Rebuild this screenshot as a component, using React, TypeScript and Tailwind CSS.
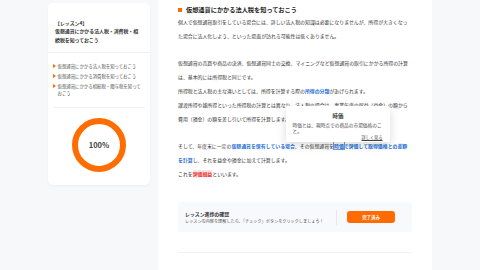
import React from 'react';

const lessons = [
  ['仮想通貨にかかる法人税を知っておこう'],
  ['仮想通貨にかかる消費税を知っておこう'],
  ['仮想通貨にかかる相続税・贈与税を知って', 'おこう'],
];

const Bullet = () => (
  <svg width="3" height="4" viewBox="0 0 3 4" className="mt-[1.5px] shrink-0">
    <path d="M0 0 L3 2 L0 4 Z" fill="#ff6b00" />
  </svg>
);

const ProgressRing = () => (
  <div className="relative w-[54px] h-[54px]">
    <svg width="54" height="54" viewBox="0 0 54 54">
      <circle cx="27" cy="27" r="24" fill="none" stroke="#ff6d00" strokeWidth="6" />
    </svg>
    <div className="absolute inset-0 flex items-center justify-center text-[7.5px] font-bold text-[#444]">
      100%
    </div>
  </div>
);

const Blue = ({ children }: { children: React.ReactNode }) => (
  <span className="font-bold text-[#1f6fd6]">{children}</span>
);

export default function App() {
  return (
    <div className="w-[480px] h-[270px] overflow-hidden flex bg-[#f7f8fa] font-['Noto_Sans_CJK_JP','Noto_Sans',sans-serif] text-[#333]">
      {/* sidebar */}
      <div className="w-[158px] shrink-0 pl-[48px] pt-[3px]">
        <div className="w-[102px] bg-white rounded-[5px] shadow-[0_1px_3px_rgba(0,0,0,0.04)]">
          <div className="px-[7px] pt-[16px] pb-[8px] text-[4.9px] font-bold leading-[8.3px] text-[#333]">
            【レッスン4】
            <br />
            仮想通貨にかかる法人税・消費税・相
            <br />
            続税を知っておこう
          </div>
          <div className="h-px bg-[#f0f1f3]" />
          <div className="px-[5px] pt-[10px] pb-[7px]">
            {lessons.map((lines, i) => (
              <div key={i} className="flex gap-[1.5px] mb-[3px] text-[4.4px] leading-[7px] text-[#555]">
                <Bullet />
                <div>
                  {lines.map((l, j) => (
                    <div key={j} className="whitespace-nowrap">{l}</div>
                  ))}
                </div>
              </div>
            ))}
          </div>
          <div className="mx-[5px] h-px bg-[#f0f1f3]" />
          <div className="flex justify-center pt-[10px] pb-[13px]">
            <ProgressRing />
          </div>
        </div>
      </div>

      {/* main */}
      <div className="w-[274px] shrink-0 bg-white px-[20px] pt-[4px] relative">
        <div className="h-[11px] flex items-center gap-[4px]">
          <div className="w-[4px] h-[4px] bg-[#ff6b00]" />
          <div className="text-[6.2px] font-bold text-[#222] whitespace-nowrap">仮想通貨にかかる法人税を知っておこう</div>
        </div>
        <div className="text-[4.9px] leading-[14px] whitespace-nowrap">
          <p>
            個人で仮想通貨取引をしている場合には、詳しい法人税の知識は必要になりませんが、所得が大きくなっ
            <br />
            た場合に法人化しよう、といった場面が訪れる可能性は低くありません。
          </p>
          <p className="mt-[13px]">
            仮想通貨の売買や商品の決済、仮想通貨同士の交換、マイニングなど仮想通貨の取引にかかる所得の計算
            <br />
            は、基本的には所得税と同じです。
          </p>
          <p>
            所得税と法人税の主な違いとしては、所得を計算する際の<Blue>所得の分類</Blue>があげられます。
          </p>
          <p>
            譲渡所得や雑所得といった所得税の計算とは異なり、法人税の場合は、事業年度の収益（益金）の額から
            <br />
            費用（損金）の額を差し引いて所得を計算します。
          </p>
          <p className="mt-[13px]">
            そして、年度末に一定の<Blue>仮想通貨を保有している場合</Blue>、その仮想通貨を
            <span className="font-bold text-[#1f6fd6] outline outline-[0.5px] outline-[#6a9be0]">時価</span>
            <Blue>で評価して取得価格との差額</Blue>
            <br />
            <Blue>を計算</Blue>し、それを益金や損金に加えて計算します。
          </p>
          <p>
            これを<span className="font-bold text-[#e53935] bg-[#fde3e3]">評価損益</span>といいます。
          </p>
        </div>

        <div className="mt-[21px] h-[30px] bg-[#f8f9fc] rounded-[3px] flex items-center pl-[7px] pr-[17px]">
          <div className="flex-1">
            <div className="text-[4.9px] font-bold leading-[8px] text-[#333]">レッスン進捗の確認</div>
            <div className="text-[4.15px] leading-[7px] text-[#555] whitespace-nowrap">
              レッスンの内容を理解したら、「チェック」ボタンをクリックしましょう！
            </div>
          </div>
          <div className="w-px h-[15px] bg-[#e6e8ec] mr-[10px]" />
          <div className="w-[48px] h-[12px] rounded-[3px] bg-[#ff6b00] text-white text-[4.4px] font-bold flex items-center justify-center">
            完了済み
          </div>
        </div>

        <div className="mt-[20px] h-px bg-[#f0f1f3]" />

        {/* tooltip */}
        <div className="absolute left-[128px] top-[106px] w-[104px] h-[36px] bg-white rounded-[2px] shadow-[0_3px_10px_rgba(0,0,0,0.15)] px-[6.5px] pt-[7px]">
          <div className="text-center text-[5.4px] font-bold leading-[7px] text-[#333]">時価</div>
          <div className="mt-[2px] text-[4.7px] leading-[6px] text-[#444] whitespace-nowrap">
            時価とは、現時点での商品の市場価格のこ
            <br />
            と。
          </div>
          <div className="text-right text-[4.2px] leading-[6px] text-[#444] underline pr-[1px]">詳しく見る</div>
        </div>
      </div>

      <div className="flex-1" />
    </div>
  );
}
